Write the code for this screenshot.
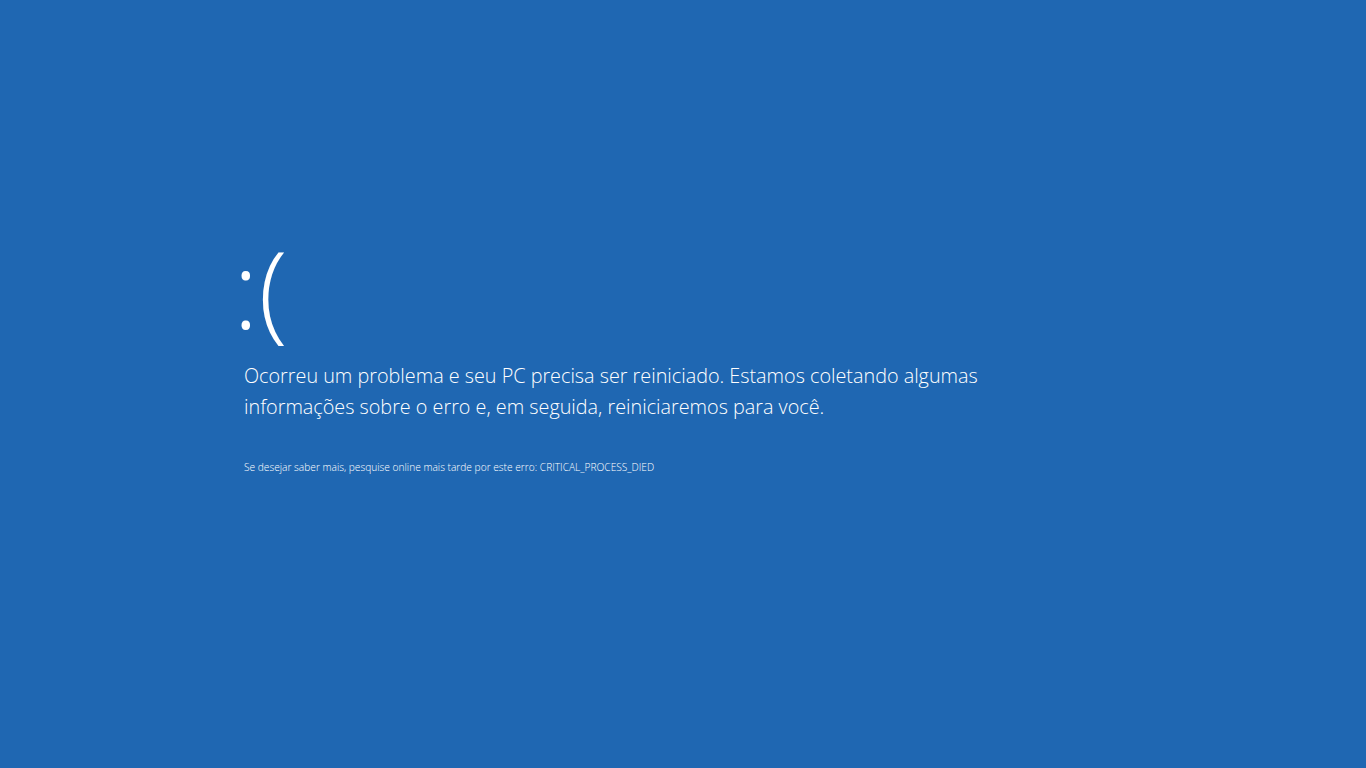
export default function App() {
  return (
    <div className="w-[1366px] h-[768px] bg-[#1f67b2] text-white overflow-hidden" style={{ fontFamily: '"Open Sans", "Noto Sans", sans-serif' }}>
      <div className="pl-[238px] pt-[224px]">
        <div className="-ml-[5px] text-[107px] leading-[128px] font-light">:(</div>
        <div className="pl-[6px] mt-[8px] text-[19.8px] leading-[31px] font-light w-[780px]">
          Ocorreu um problema e seu PC precisa ser reiniciado. Estamos coletando algumas informações sobre o erro e, em seguida, reiniciaremos para você.
        </div>
        <div className="pl-[6px] mt-[38px] text-[10.2px] leading-[14px] font-light">
          Se desejar saber mais, pesquise online mais tarde por este erro: CRITICAL_PROCESS_DIED
        </div>
      </div>
    </div>
  );
}
